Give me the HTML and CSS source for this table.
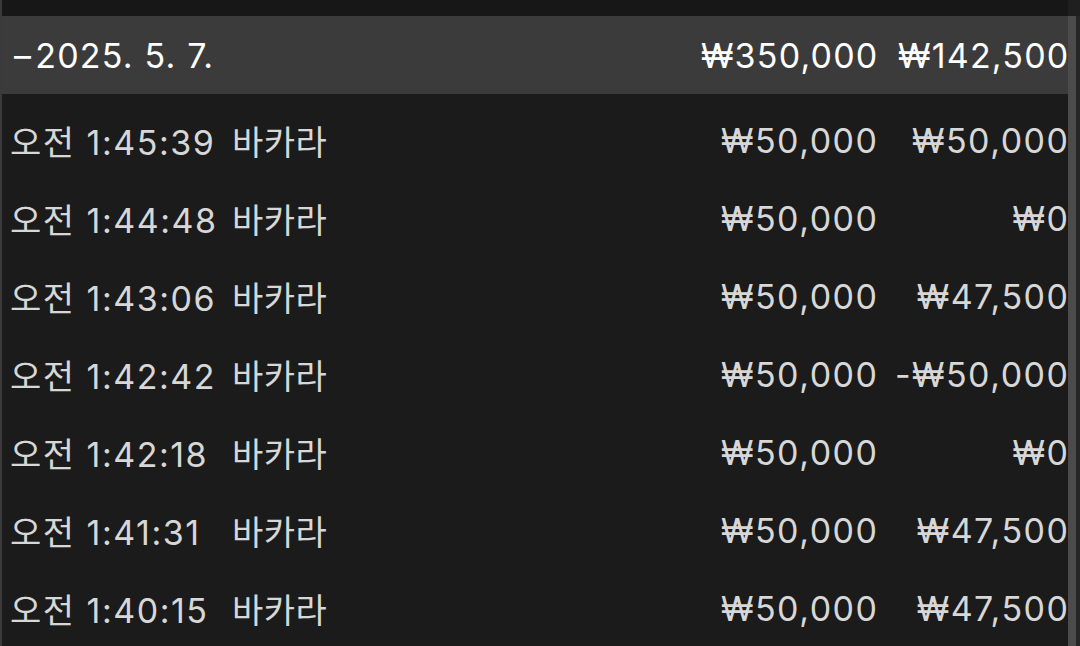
FILE: index.html
```html
<!DOCTYPE html>
<html lang="ko">
<head>
  <meta charset="UTF-8">
  <meta name="viewport" content="width=device-width, initial-scale=1.0">
  <title>기록</title>
  <link rel="stylesheet" href="styles.css">
</head>
<body>

  <div class="screen">
    <div class="content">
      <div class="topbar"></div>

      <div class="row day">
        <span class="time"><span class="dash">–</span>2025. 5. 7.</span>
        <span class="game"></span>
        <span class="bet">₩350,000</span>
        <span class="result">₩142,500</span>
      </div>

      <div class="rows">
        <div class="row">
          <span class="time">오전 1:45:39</span>
          <span class="game">바카라</span>
          <span class="bet">₩50,000</span>
          <span class="result">₩50,000</span>
        </div>
        <div class="row">
          <span class="time">오전 1:44:48</span>
          <span class="game">바카라</span>
          <span class="bet">₩50,000</span>
          <span class="result">₩0</span>
        </div>
        <div class="row">
          <span class="time">오전 1:43:06</span>
          <span class="game">바카라</span>
          <span class="bet">₩50,000</span>
          <span class="result">₩47,500</span>
        </div>
        <div class="row">
          <span class="time">오전 1:42:42</span>
          <span class="game">바카라</span>
          <span class="bet">₩50,000</span>
          <span class="result">-₩50,000</span>
        </div>
        <div class="row">
          <span class="time">오전 1:42:18</span>
          <span class="game">바카라</span>
          <span class="bet">₩50,000</span>
          <span class="result">₩0</span>
        </div>
        <div class="row">
          <span class="time">오전 1:41:31</span>
          <span class="game">바카라</span>
          <span class="bet">₩50,000</span>
          <span class="result">₩47,500</span>
        </div>
        <div class="row">
          <span class="time">오전 1:40:15</span>
          <span class="game">바카라</span>
          <span class="bet">₩50,000</span>
          <span class="result">₩47,500</span>
        </div>
      </div>
    </div>

    <div class="scrollbar">
      <div class="scroll-top"></div>
      <div class="scroll-thumb"></div>
    </div>
  </div>

</body>
</html>
```

FILE: styles.css
```css
html, body {
  margin: 0;
  padding: 0;
  height: 100%;
  overflow: hidden;
}
body {
  background-color: #1b1b1b;
  font-family: Inter, "Noto Sans CJK KR", sans-serif;
  color: #d7d7d7;
}
.screen {
  display: flex;
  height: 646px;
  border-left: 2px solid #3a3a3a;
}
.content {
  flex: 1;
  min-width: 0;
}
.topbar {
  height: 16px;
  background: #171717;
}
.rows {
  padding-top: 7px;
}
.row {
  display: grid;
  grid-template-columns: 224px 1fr 190px 191px;
  align-items: center;
  height: 78px;
  padding-left: 8px;
  font-size: 34px;
  letter-spacing: 1.5px;
  white-space: nowrap;
}
.row.day {
  background: #3b3b3b;
  color: #ffffff;
  letter-spacing: 1.2px;
}
.dash {
  margin-left: 4px;
  margin-right: 3px;
}
.time {
  text-align: left;
}
.game {
  text-align: left;
  margin-left: -2px;
  letter-spacing: 0.5px;
}
.bet, .result {
  text-align: right;
  margin-right: -1.5px;
}
.scrollbar {
  width: 12px;
  display: flex;
  flex-direction: column;
  background: #262626;
}
.scroll-top {
  height: 16px;
  background: #1f1f1f;
}
.scroll-thumb {
  flex: 1;
  width: 8px;
  background: #4b4b4b;
}
```
